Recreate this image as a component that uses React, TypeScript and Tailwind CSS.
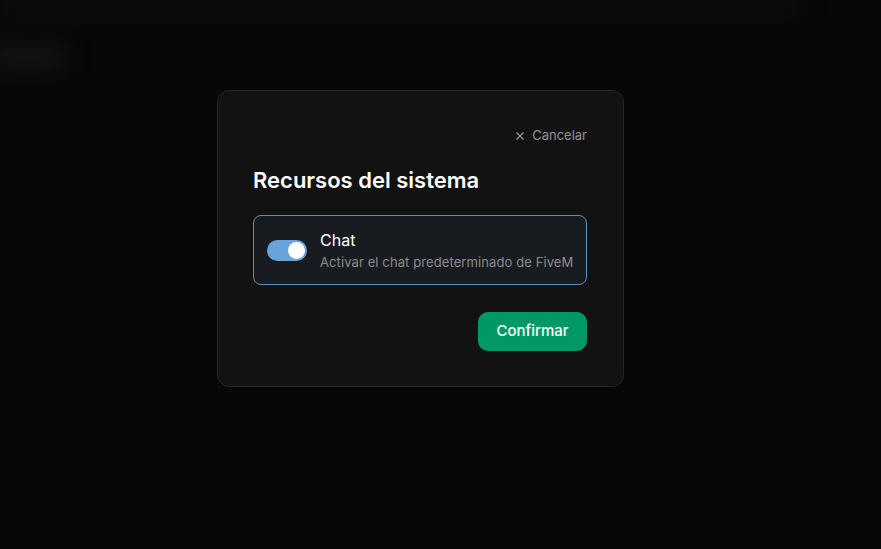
import React, { useState } from "react"

const Toggle: React.FC<{ on: boolean; onChange: () => void }> = ({ on, onChange }) => (
    <button
        onClick={onChange}
        className={`relative h-[21px] w-[40px] shrink-0 rounded-full ${on ? "bg-[#67a4dc]" : "bg-[#3a3a3a]"}`}
    >
        <span
            className={`absolute top-[2px] h-[17px] w-[17px] rounded-full bg-white ${on ? "left-[21px]" : "left-[2px]"}`}
        />
    </button>
)

export default function App() {
    const [chat, setChat] = useState(true)

    return (
        <div
            className="relative min-h-[549px] w-full overflow-hidden bg-[#070707]"
            style={{ fontFamily: "Inter, 'Noto Sans', sans-serif" }}
        >
            {/* blurred page behind the overlay */}
            <div className="absolute inset-0 blur-md">
                <div className="h-[12px] w-[800px] bg-[#111111]" />
                <div className="ml-[-10px] mt-[38px] h-[16px] w-[75px] rounded bg-[#1c1c1c]" />
            </div>

            <div className="relative flex justify-center pt-[90px]">
                <div className="ml-[-40px] w-[407px] rounded-xl border border-[#262626] bg-[#121212] pl-[35px] pr-[36px] pt-[36px] pb-[35px]">
                    <div className="flex justify-end">
                        <button className="flex h-[18px] items-center gap-[7px] text-[13px] text-[#939393]">
                            <svg width="10" height="10" viewBox="0 0 10 10" fill="none" stroke="currentColor" strokeWidth="1.2">
                                <path d="M1.5 1.5l7 7M8.5 1.5l-7 7" />
                            </svg>
                            Cancelar
                        </button>
                    </div>

                    <h2 className="mt-[21px] text-[22px] leading-7 font-semibold text-white">Recursos del sistema</h2>

                    <div className="mt-[21px] flex h-[70px] items-center rounded-lg border border-[#5b8fc4] bg-[#181b1f] pl-[13px]">
                        <Toggle on={chat} onChange={() => setChat(!chat)} />
                        <div className="ml-[13px] flex flex-col">
                            <span className="text-[16px] leading-6 text-white">Chat</span>
                            <span className="text-[13px] leading-5 tracking-[0.1px] text-[#8c8c8c]">Activar el chat predeterminado de FiveM</span>
                        </div>
                    </div>

                    <div className="mt-[27px] flex justify-end">
                        <button className="h-[39px] w-[109px] rounded-[10px] bg-[#009966] text-[15px] font-medium text-white">
                            Confirmar
                        </button>
                    </div>
                </div>
            </div>
        </div>
    )
}
